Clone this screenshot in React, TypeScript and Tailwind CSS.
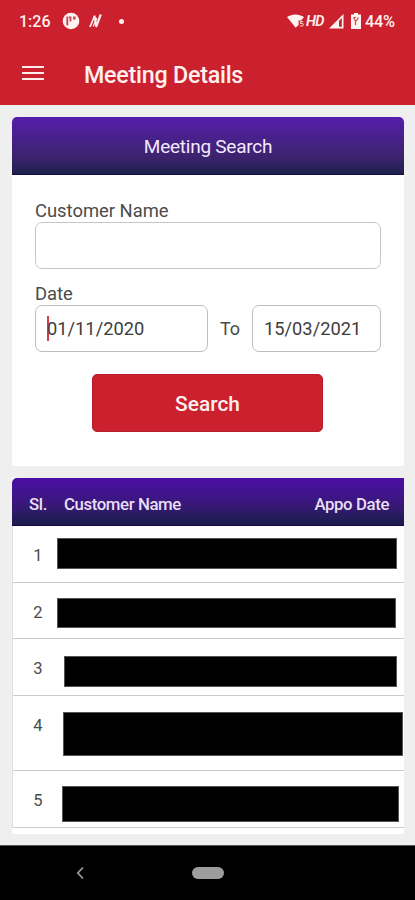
import React from "react";

const rows = [
  { n: 1, h: "h-[57px]", bar: "mt-3 h-[31px] w-[340px]" },
  { n: 2, h: "h-[56px]", bar: "mt-[15px] h-[30px] w-[339px]" },
  { n: 3, h: "h-[57px]", bar: "ml-[7px] mt-[17px] h-[31px] w-[333px]" },
  { n: 4, h: "h-[75px]", bar: "ml-1.5 mt-4 h-[44px] w-[340px]" },
  { n: 5, h: "h-[57px]", bar: "ml-[5px] mt-[15px] h-[36px] w-[337px]" },
];

function StatusBar() {
  return (
    <div className="flex h-[42px] items-center pl-[19px] pr-[18px] text-[#fff0ee]">
      <span className="w-[43px] pt-px text-[16px] font-medium leading-5">1:26</span>
      <svg className="h-[18px] w-[18px]" viewBox="0 0 18 18">
        <circle cx="9" cy="9" r="8.3" fill="#fff4f2" />
        <path d="M5.3 4.6V13.4" stroke="#cb3742" strokeWidth="1.8" />
        <path d="M6.8 4.6H9.4V9.6H7.6V6H6.8ZM11 4.6H13.6V7.4H11Z" fill="#c94750" />
      </svg>
      <svg className="ml-[9px] h-4 w-[15px]" viewBox="0 0 15 16" fill="none" stroke="#fff0ee">
        <path d="M1 14L5.6 3" strokeWidth="1.7" />
        <path d="M5.4 2.6L7.4 13.2" strokeWidth="2" />
        <path d="M7 14L11.8 1.5" strokeWidth="2.2" />
        <path d="M4.2 13.6L7.8 5" strokeWidth="1.4" />
      </svg>
      <span className="ml-[15px] h-[5px] w-[5px] rounded-full bg-[#fff0ee]" />
      <div className="ml-auto flex items-center">
        <svg className="h-[15px] w-[18px]" viewBox="0 0 18 15">
          <path d="M0 3.1C5-.3 11.8-.3 17 3.1L14.2 6.5H11.6V11L8.7 13.8Z" fill="#fff3f1" />
          <path d="M16.2 7.6H13.4V9.5C15 9.1 16.3 9.6 16.3 10.8S14.3 12.5 12.9 11.8" fill="none" stroke="#f9b7b6" strokeWidth="1.1" />
        </svg>
        <span className="ml-px w-[18px] pt-px text-[14.5px] font-semibold italic leading-5 tracking-[-0.8px]">HD</span>
        <svg className="ml-[5px] h-[15px] w-[15px]" viewBox="0 0 15 15">
          <path d="M0 14.5L14.5 0V14.5Z" fill="#fff3f1" />
          <path d="M10 6.7L12.8 4V12.8H10Z" fill="#cb202e" />
        </svg>
        <svg className="ml-[7px] h-4 w-2.5" viewBox="0 0 10 16">
          <path d="M3 0H7V1.6H10V16H0V1.6H3Z" fill="#fff3f1" />
          <path d="M2.5 4.5L4.5 8V12M7.5 4.5L5.2 8.3M3 4.5H5" fill="none" stroke="#cb4952" strokeWidth="1.2" />
        </svg>
        <span className="ml-1 w-8 whitespace-nowrap pt-px text-[16.3px] font-medium leading-5 tracking-[-0.3px]">44%</span>
      </div>
    </div>
  );
}

export default function App() {
  return (
    <div className="flex h-[900px] w-[415px] flex-col overflow-hidden bg-[#efefef] font-['Roboto',sans-serif] text-[#4b4b4b]">
      <header className="h-[105px] shrink-0 bg-[#cb202e]">
        <StatusBar />
        <div className="flex h-[61px] items-center pl-[22px]">
          <div className="flex w-[22px] flex-col gap-1">
            <span className="h-[2px] bg-[#ffeceb]" />
            <span className="h-[2px] bg-[#ffeceb]" />
            <span className="h-[2px] bg-[#ffeceb]" />
          </div>
          <h1 className="ml-10 whitespace-nowrap pt-1 text-[23.3px] font-medium leading-7 tracking-[-0.25px] text-[#fff0ee]">Meeting Details</h1>
        </div>
      </header>

      <main className="flex h-[740px] shrink-0 flex-col gap-3 pl-3 pr-[11px] pt-3">
        <section className="h-[349px] shrink-0 overflow-hidden rounded-t-[5px] bg-white">
          <div className="flex h-[58px] items-center justify-center border-b border-[#120942] bg-linear-to-b from-[#551cab] via-[#3d226f] via-70% to-[#1d214c] pt-1 text-[19px] tracking-[-0.25px] text-[#f3e9fa]">
            Meeting Search
          </div>
          <div className="flex flex-col pl-[23px] pr-[23px] pt-[25px]">
            <label className="h-[22px] text-[18.4px] leading-[22px]">Customer Name</label>
            <div className="h-[47px] rounded-[7px] border border-[#c6c6c6]" />
            <label className="mt-[13px] h-[23px] text-[18.4px] leading-[24px]">Date</label>
            <div className="flex h-[47px] items-center">
              <div className="flex h-full w-[173px] items-center rounded-[7px] border border-[#bebebe] pl-[11px] text-[18.3px] text-[#3d3d3d]">
                <span className="h-[25px] w-[2px] bg-[#d33c4c]" />
                <span className="-ml-0.5">01/11/2020</span>
              </div>
              <span className="w-11 text-center text-[18px]">To</span>
              <div className="flex h-full w-[129px] items-center rounded-[7px] border border-[#bebebe] pl-[11px] text-[18.3px] text-[#3d3d3d]">15/03/2021</div>
            </div>
            <button className="ml-[57px] mt-[22px] h-[58px] w-[231px] rounded-[5px] border border-[#b81d2d] bg-[#cb202e] pt-[3px] text-[20.9px] font-medium text-[#fff0ee]">Search</button>
          </div>
        </section>

        <section className="h-[356px] shrink-0 bg-white">
          <div className="flex h-12 items-center rounded-tl-[5px] border-b border-[#120942] bg-linear-to-b from-[#4b0ea6] via-[#39177a] via-55% to-[#1a1c4b] pl-[17px] pr-[15px] pt-[6px] text-[16.8px] font-medium tracking-[-0.4px] text-[#e9dff4]">
            <span className="w-[35px]">Sl.</span>
            <span>Customer Name</span>
            <span className="ml-auto">Appo Date</span>
          </div>
          <div className="border-l border-[#dedede]">
            {rows.map((r) => (
              <div key={r.n} className={`flex items-start border-b border-[#cbcbcb] ${r.h}`}>
                <span className="w-11 shrink-0 pl-1.5 pt-5 text-center text-[16.5px] leading-5">{r.n}</span>
                <span className={`shrink-0 border border-[#555] bg-black ${r.bar}`} />
              </div>
            ))}
          </div>
        </section>
      </main>

      <nav className="flex h-[55px] items-center border-t border-[#555] bg-black">
        <svg className="ml-[76px] h-3.5 w-2" viewBox="0 0 8 14">
          <path d="M7 1.5L1.8 7L7 12.5" fill="none" stroke="#999" strokeWidth="1.8" />
        </svg>
        <span className="ml-[108px] h-3 w-8 rounded-full bg-[#9d9d9d]" />
      </nav>
    </div>
  );
}
